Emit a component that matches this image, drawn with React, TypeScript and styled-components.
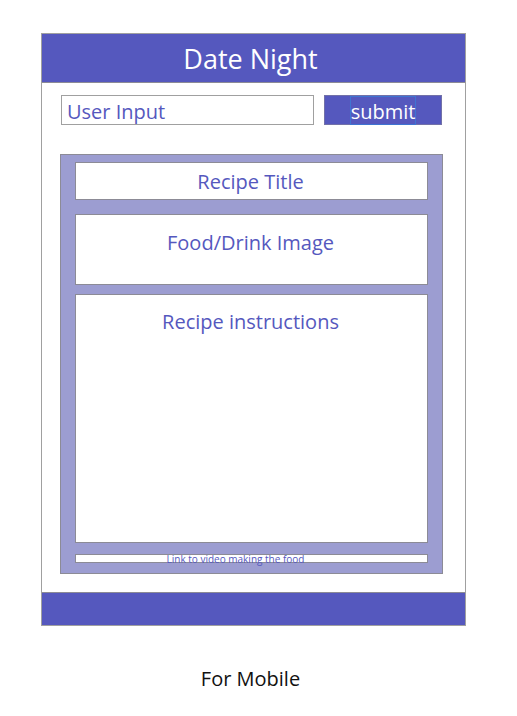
import React from "react";
import styled, { createGlobalStyle } from "styled-components";

const indigo = "#5558be";
const line = "#8c8b96";

const GlobalStyle = createGlobalStyle`
  *, *::before, *::after { box-sizing: border-box; }
  body {
    margin: 0;
    background: #fff;
    font-family: "Open Sans", "Noto Sans", sans-serif;
  }
`;

const Page = styled.main`
  padding: 33px 51px 16px 41px;
`;

const Frame = styled.section`
  border: 1px solid #a0a0a0;
  background: #fff;
`;

const Header = styled.header`
  height: 49px;
  border-bottom: 1px solid ${line};
  background: ${indigo};
  text-align: center;
`;

const Title = styled.h1`
  margin: 0;
  padding-right: 6px;
  color: #fff;
  font-size: 27px;
  font-weight: 400;
  line-height: 50px;
`;

const SearchForm = styled.form`
  display: flex;
  gap: 10px;
  padding: 12px 23px 0 19px;
`;

const TextInput = styled.input`
  flex: 1;
  min-width: 0;
  height: 30px;
  padding: 3px 5px 0;
  border: 1px solid #a0a0a0;
  border-radius: 0;
  background: #fff;
  color: ${indigo};
  font: inherit;
  font-size: 20px;
  outline: none;

  &::placeholder {
    color: ${indigo};
    opacity: 1;
  }
`;

const SubmitButton = styled.button`
  display: flex;
  justify-content: center;
  width: 118px;
  height: 30px;
  padding: 0;
  border: 1px solid #7271a8;
  border-radius: 0;
  background: ${indigo};
  color: #fff;
  font: inherit;
  font-size: 20px;
  cursor: pointer;
`;

const SubmitLabel = styled.span`
  height: 29px;
  border: 1px solid #3f74d2;
  line-height: 30px;
`;

const Recipe = styled.article`
  display: flex;
  flex-direction: column;
  margin: 29px 22px 18px 18px;
  padding: 7px 14px 10px;
  border: 1px solid ${line};
  background: #9c9dd1;
  color: ${indigo};
  text-align: center;
`;

const Box = styled.div<{ $height: number; $gap: number; $top: number }>`
  height: ${(p) => p.$height}px;
  margin-bottom: ${(p) => p.$gap}px;
  padding-top: ${(p) => p.$top}px;
  padding-right: 2px;
  border: 1px solid ${line};
  background: #fff;
  font-size: 20px;
  line-height: 28px;
`;

const RecipeTitle = styled.h2`
  margin: 0;
  font: inherit;
`;

const Text = styled.p`
  margin: 0;
`;

const VideoRow = styled.div`
  height: 9px;
  padding-right: 32px;
  border: 1px solid ${line};
  background: #fff;
  font-size: 10px;
  line-height: 8px;
`;

const VideoLink = styled.a`
  display: block;
  color: ${indigo};
  text-decoration: none;
`;

const Footer = styled.footer`
  height: 33px;
  border-top: 1px solid ${line};
  background: ${indigo};
`;

const Caption = styled.p`
  margin: 39px 0 0;
  padding-right: 6px;
  color: #111;
  font-size: 20px;
  line-height: 28px;
  text-align: center;
`;

export default function App() {
  return (
    <>
      <GlobalStyle />
      <Page>
        <Frame>
          <Header>
            <Title>Date Night</Title>
          </Header>
          <SearchForm onSubmit={(e: React.FormEvent) => e.preventDefault()}>
            <TextInput type="text" aria-label="User Input" placeholder="User Input" />
            <SubmitButton type="submit">
              <SubmitLabel>submit</SubmitLabel>
            </SubmitButton>
          </SearchForm>
          <Recipe>
            <Box $height={38} $gap={14} $top={5}>
              <RecipeTitle>Recipe Title</RecipeTitle>
            </Box>
            <Box $height={71} $gap={9} $top={14}>
              <Text>Food/Drink Image</Text>
            </Box>
            <Box $height={249} $gap={11} $top={13}>
              <Text>Recipe instructions</Text>
            </Box>
            <VideoRow>
              <VideoLink href="#video">Link to video making the food</VideoLink>
            </VideoRow>
          </Recipe>
          <Footer />
        </Frame>
        <Caption>For Mobile</Caption>
      </Page>
    </>
  );
}
